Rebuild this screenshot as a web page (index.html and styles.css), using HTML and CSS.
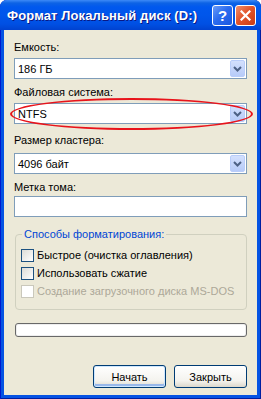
FILE: index.html
```html
<!DOCTYPE html>
<html lang="ru">
<head>
    <meta charset="UTF-8">
    <meta name="viewport" content="width=device-width, initial-scale=1.0">
    <title>Формат Локальный диск (D:)</title>
    <link rel="stylesheet" href="styles.css">
</head>
<body>
    <div class="window">
        <div class="titlebar">
            <span class="title">Формат Локальный диск (D:)</span>
            <div class="title-buttons">
                <span class="tbtn help">?</span>
                <span class="tbtn close">
                    <svg width="11" height="11" viewBox="0 0 11 11">
                        <path d="M1.5 1.5 L9.5 9.5 M9.5 1.5 L1.5 9.5" stroke="#fff" stroke-width="2.2" stroke-linecap="square"/>
                    </svg>
                </span>
            </div>
        </div>

        <div class="client">
            <div class="label label-first">Емкость:</div>
            <div class="combo">
                <span class="combo-text">186 ГБ</span>
                <span class="combo-arrow"><svg width="9" height="6" viewBox="0 0 9 6"><path d="M1 1 L4.5 4.5 L8 1" fill="none" stroke="#4D6185" stroke-width="2"/></svg></span>
            </div>

            <div class="label label-fs">Файловая система:</div>
            <div class="combo">
                <span class="combo-text">NTFS</span>
                <span class="combo-arrow"><svg width="9" height="6" viewBox="0 0 9 6"><path d="M1 1 L4.5 4.5 L8 1" fill="none" stroke="#4D6185" stroke-width="2"/></svg></span>
            </div>

            <div class="label label-cluster">Размер кластера:</div>
            <div class="combo">
                <span class="combo-text">4096 байт</span>
                <span class="combo-arrow"><svg width="9" height="6" viewBox="0 0 9 6"><path d="M1 1 L4.5 4.5 L8 1" fill="none" stroke="#4D6185" stroke-width="2"/></svg></span>
            </div>

            <div class="label label-volume">Метка тома:</div>
            <div class="textbox"></div>

            <fieldset class="group">
                <legend>Способы форматирования:</legend>
                <div class="check-row">
                    <span class="checkbox"></span>
                    <span>Быстрое (очистка оглавления)</span>
                </div>
                <div class="check-row">
                    <span class="checkbox"></span>
                    <span>Использовать сжатие</span>
                </div>
                <div class="check-row disabled">
                    <span class="checkbox"></span>
                    <span>Создание загрузочного диска MS-DOS</span>
                </div>
            </fieldset>

            <div class="progress"></div>

            <div class="buttons">
                <button class="btn btn-default">Начать</button>
                <button class="btn">Закрыть</button>
            </div>
        </div>

        <!-- красная пометка вокруг файловой системы -->
        <div class="mark"></div>
    </div>
</body>
</html>
```

FILE: styles.css
```css
* {
    box-sizing: border-box;
}

body {
    margin: 0;
    padding: 0;
    overflow: hidden;
    font-family: "Liberation Sans", Arial, sans-serif;
    font-size: 11px;
    color: #000;
}

.window {
    position: relative;
    width: 261px;
    height: 399px;
    background: #0553E3;
    border-radius: 7px 7px 0 0;
    box-shadow: inset 1px 0 #0019CF, inset -1px 0 #001EA0, inset 0 -1px #001EA0;
}

.titlebar {
    height: 30px;
    display: flex;
    align-items: center;
    justify-content: space-between;
    padding: 0 5px 0 7px;
    border-radius: 7px 7px 0 0;
    background: linear-gradient(#3D8AF7 0, #0D63E5 3px, #0058EE 7px, #0056EB 50%, #0050E3 80%, #0042D0 100%);
}

.title {
    color: #fff;
    font-weight: bold;
    font-size: 13px;
    letter-spacing: 0.12px;
    text-shadow: 1px 1px #0A1883;
    margin-top: 1px;
}

.title-buttons {
    display: flex;
    gap: 2px;
    margin-top: 1px;
}

.tbtn {
    width: 21px;
    height: 21px;
    border: 1px solid #fff;
    border-radius: 3px;
    display: flex;
    align-items: center;
    justify-content: center;
}

.help {
    background: linear-gradient(135deg, #6A9CF8 0%, #2C6CEF 45%, #1957E0 100%);
    color: #fff;
    font-weight: bold;
    font-size: 15px;
}

.close {
    background: linear-gradient(135deg, #F0906E 0%, #E2552C 45%, #C83B13 100%);
}

.client {
    margin: 0 4px;
    height: 365px;
    background: #ECE9D8;
    padding: 0 10px;
}

.label {
    line-height: 13px;
    height: 13px;
    margin-bottom: 4px;
}

.label-first {
    padding-top: 11px;
    height: 24px;
}

.label-fs {
    margin-top: 7px;
}

.label-cluster {
    margin-top: 10px;
    margin-bottom: 6px;
}

.label-volume {
    margin-top: 7px;
    margin-bottom: 2px;
}

.combo {
    height: 21px;
    border: 1px solid #7F9DB9;
    background: #fff;
    display: flex;
    align-items: center;
    justify-content: space-between;
    padding: 1px 1px 1px 3px;
}

.combo-arrow {
    width: 15px;
    height: 17px;
    border: 1px solid #B9CDFA;
    border-radius: 2px;
    background: linear-gradient(#D3E0FD, #B7CBF8);
    display: flex;
    align-items: center;
    justify-content: center;
}

.textbox {
    height: 21px;
    border: 1px solid #7F9DB9;
    background: #fff;
}

.group {
    margin: 11px 0 0 1px;
    padding: 8px 5px 11px;
    border: 1px solid #D0D0BF;
    border-radius: 4px;
    min-width: 0;
}

.group legend {
    padding: 0 2px;
    margin-left: 1px;
    line-height: 13px;
    color: #0046D5;
}

.check-row {
    display: flex;
    align-items: center;
    gap: 3px;
    height: 13px;
    line-height: 13px;
    margin-bottom: 5px;
    white-space: nowrap;
}

.check-row:last-child {
    margin-bottom: 0;
}

.checkbox {
    width: 13px;
    height: 13px;
    border: 1px solid #1C5180;
    background: linear-gradient(135deg, #DCDCD7, #FFFFFF);
    flex-shrink: 0;
}

.disabled {
    color: #ACA899;
}

.disabled .checkbox {
    border-color: #CAC8BB;
    background: #fff;
}

.progress {
    margin: 13px 0 0 1px;
    height: 14px;
    border: 1px solid #686868;
    border-radius: 3px;
    background: #fff;
    box-shadow: inset 0 0 0 1px #EEEEEE;
}

.buttons {
    display: flex;
    justify-content: flex-end;
    gap: 8px;
    margin-top: 28px;
}

.btn {
    width: 73px;
    height: 23px;
    border: 1px solid #003C74;
    border-radius: 3px;
    background: linear-gradient(#FFFFFF, #F4F3EE 70%, #DCD8CC);
    font-family: "Liberation Sans", Arial, sans-serif;
    font-size: 11px;
    color: #000;
    padding: 0;
}

.btn-default {
    box-shadow: inset 0 0 0 1px #CEE7FF, inset 0 -2px 0 1px #98B8EA;
}

.mark {
    position: absolute;
    left: 10px;
    top: 98px;
    width: 243px;
    height: 32px;
    border: 2px solid #E8141B;
    border-radius: 50%;
}
```
